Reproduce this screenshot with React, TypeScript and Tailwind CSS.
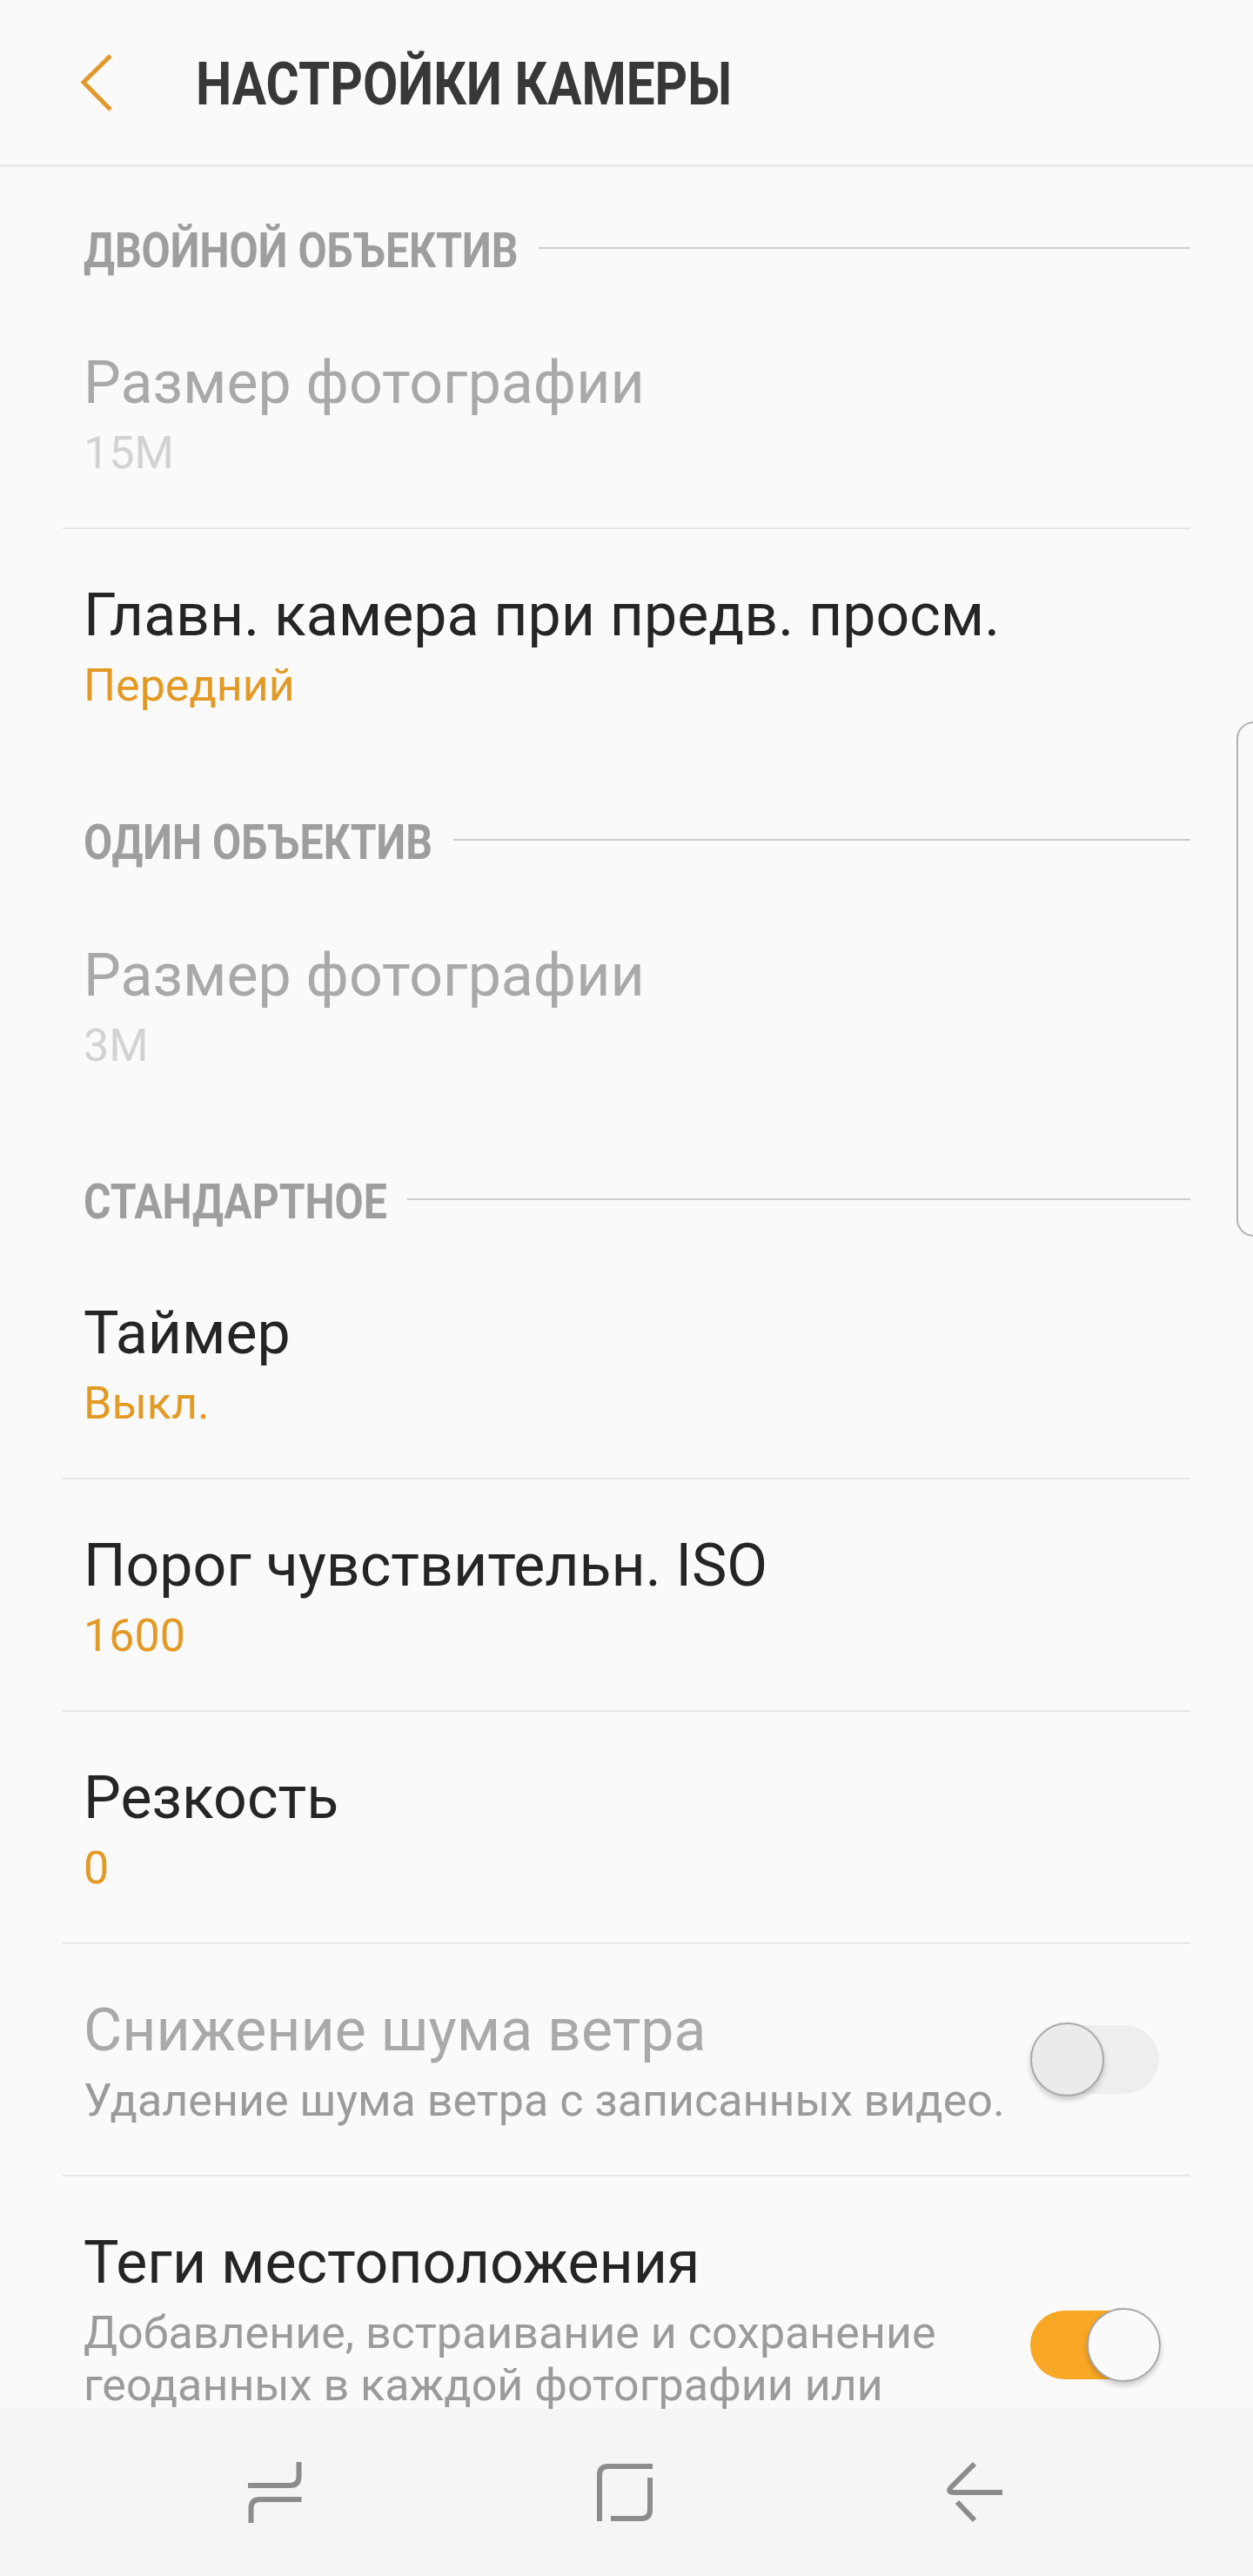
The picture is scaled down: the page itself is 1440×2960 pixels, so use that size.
import React from "react";

const font = { fontFamily: '"Roboto", "Liberation Sans", sans-serif' };

const lineOffset: Record<string, string> = {
  "ДВОЙНОЙ ОБЪЕКТИВ": "ml-[523px]",
  "ОДИН ОБЪЕКТИВ": "ml-[425px]",
  "СТАНДАРТНОЕ": "ml-[372px]",
};

function SectionHeader({ label, box }: { label: string; box: string }) {
  return (
    <div className={`${box} shrink-0 pl-[96px] pr-[72px] flex items-start`}>
      <div className="h-[56px] pt-[5px] shrink-0 w-0 flex items-center">
        <span className="block origin-left scale-x-[0.86] whitespace-nowrap text-[56px] leading-[56px] font-bold text-[#9e9e9e]">
          {label}
        </span>
      </div>
      <div className={`flex-1 h-[2px] mt-[27px] bg-[#cccccc] ${lineOffset[label]}`} />
    </div>
  );
}

function Toggle({ on }: { on: boolean }) {
  return (
    <div className={`relative w-[148px] h-[79px] rounded-full shrink-0 ${on ? "bg-[#f9a825]" : "bg-[#eeeeee]"}`}>
      <div
        className={`absolute top-[-3px] w-[85px] h-[85px] rounded-full border-2 border-[#a8a8a8] shadow-[0_4px_6px_rgba(0,0,0,0.2)] ${
          on ? "left-[65px] bg-[#fafafa]" : "left-0 bg-[#ebebeb]"
        }`}
      />
    </div>
  );
}

function Row({
  title,
  sub,
  kind = "value",
  divider = true,
  toggle,
  disabled = false,
  tall = false,
}: {
  title: string;
  sub: string;
  kind?: "value" | "desc";
  divider?: boolean;
  toggle?: boolean;
  disabled?: boolean;
  tall?: boolean;
}) {
  const titleColor = disabled ? "text-[#a9a9a9]" : "text-[#252525]";
  const subColor =
    kind === "desc"
      ? "text-[#9b9b9b]"
      : disabled
        ? "text-[#d2d2d2]"
        : "text-[#e39a24]";
  return (
    <div
      className={`mx-[72px] pl-[24px] pr-[36px] flex items-center justify-between shrink-0 ${
        tall ? "h-[387px]" : "h-[267px]"
      } ${divider ? "border-b-2 border-[#e6e6e6]" : ""}`}
    >
      <div className={`self-start pt-[60px] ${toggle !== undefined ? "w-[1076px]" : ""}`}>
        <div className={`text-[68px] leading-[78px] ${titleColor}`}>{title}</div>
        <div className={`mt-[12px] text-[52px] leading-[60px] ${subColor}`}>{sub}</div>
      </div>
      {toggle !== undefined && <Toggle on={toggle} />}
    </div>
  );
}

export default function App() {
  return (
    <div style={font} className="relative w-[1440px] h-[2960px] bg-[#fafafa] flex flex-col overflow-hidden">
      <header className="h-[192px] shrink-0 border-b-[3px] border-[#e8e8e8] flex items-center pl-[91px]">
        <svg width="40" height="66" viewBox="0 0 40 66" className="shrink-0">
          <path d="M36 2 L5 32.500 L36 64" fill="none" stroke="#e2982a" strokeWidth="5" />
        </svg>
        <div className="ml-[94px] w-0 pt-[4px]">
          <span className="block origin-left scale-x-[0.86] whitespace-nowrap text-[68px] leading-[80px] font-bold text-[#383838]">
            НАСТРОЙКИ КАМЕРЫ
          </span>
        </div>
      </header>

      <main className="flex-1 min-h-0 overflow-hidden flex flex-col">
        <SectionHeader label="ДВОЙНОЙ ОБЪЕКТИВ" box="h-[149px] pt-[65px]" />
        <Row title="Размер фотографии" sub="15M" disabled />
        <Row title="Главн. камера при предв. просм." sub="Передний" divider={false} />
        <SectionHeader label="ОДИН ОБЪЕКТИВ" box="h-[147px] pt-[62px]" />
        <Row title="Размер фотографии" sub="3M" disabled divider={false} />
        <SectionHeader label="СТАНДАРТНОЕ" box="h-[144px] pt-[61px]" />
        <Row title="Таймер" sub="Выкл." />
        <Row title="Порог чувствительн. ISO" sub="1600" />
        <Row title="Резкость" sub="0" />
        <Row title="Снижение шума ветра" sub="Удаление шума ветра с записанных видео." kind="desc" toggle={false} disabled />
        <Row
          title="Теги местоположения"
          sub="Добавление, встраивание и сохранение геоданных в каждой фотографии или видео."
          kind="desc"
          toggle={true}
          divider={false}
          tall
        />
      </main>

      <nav className="h-[192px] shrink-0 bg-[#f5f5f5] flex items-start">
        <svg width="1440" height="192" viewBox="0 2768 1440 192" fill="none" stroke="#8c8c8c" strokeWidth="6">
          <path d="M343.500 2829 V2846 Q343.500 2856 333 2856 H285" />
          <path d="M346.500 2872 H299 Q288.500 2872 288.500 2882 V2899" />
          <path d="M750 2834 H699 Q689 2834 689 2844 V2897" />
          <path d="M747 2847 V2884 Q747 2894 737 2894 H702" />
          <path d="M1120 2831 L1094 2857 Q1087 2864 1097 2864 H1152" />
          <path d="M1100 2875 L1120 2896" />
        </svg>
      </nav>

      <div className="absolute right-[-31px] top-[829px] w-[50px] h-[592px] rounded-[20px] border-2 border-[#b4b4b4]" />
    </div>
  );
}
